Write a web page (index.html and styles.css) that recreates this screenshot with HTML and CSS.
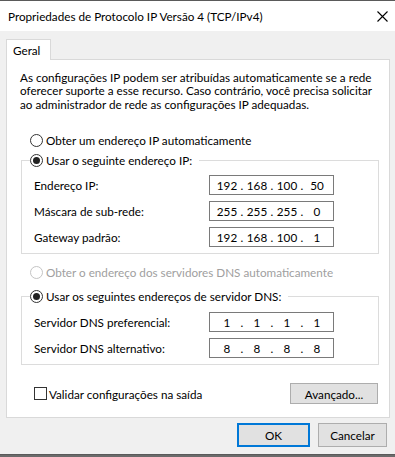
FILE: index.html
```html
<!DOCTYPE html>
<html lang="pt">
<head>
<meta charset="utf-8">
<title>Propriedades de Protocolo IP Versão 4 (TCP/IPv4)</title>
<link rel="stylesheet" href="styles.css">
</head>
<body>
<div class="window">
  <div class="titlebar">
    <span class="title">Propriedades de Protocolo IP Versão 4 (TCP/IPv4)</span>
    <svg class="close" width="11" height="11" viewBox="0 0 11 11"><path d="M0.5 0.5 L10.5 10.5 M10.5 0.5 L0.5 10.5" stroke="#000" stroke-width="1.1" fill="none"/></svg>
  </div>
  <div class="client">
    <div class="tabs"><div class="tab">Geral</div></div>
    <div class="panel">
      <p class="desc">As configurações IP podem ser atribuídas automaticamente se a rede<br>oferecer suporte a esse recurso. Caso contrário, você precisa solicitar<br>ao administrador de rede as configurações IP adequadas.</p>

      <div class="option first"><span class="radio"></span><span>Obter um endereço IP automaticamente</span></div>
      <fieldset class="group ip">
        <legend class="option"><span class="radio checked"></span><span>Usar o seguinte endereço IP:</span></legend>
        <div class="row"><span>Endereço IP:</span><div class="ipbox"><span class="seg">192</span><span class="dot">.</span><span class="seg">168</span><span class="dot">.</span><span class="seg">100</span><span class="dot">.</span><span class="seg">50</span></div></div>
        <div class="row"><span>Máscara de sub-rede:</span><div class="ipbox"><span class="seg">255</span><span class="dot">.</span><span class="seg">255</span><span class="dot">.</span><span class="seg">255</span><span class="dot">.</span><span class="seg">0</span></div></div>
        <div class="row"><span>Gateway padrão:</span><div class="ipbox"><span class="seg">192</span><span class="dot">.</span><span class="seg">168</span><span class="dot">.</span><span class="seg">100</span><span class="dot">.</span><span class="seg">1</span></div></div>
      </fieldset>

      <div class="option dns-auto disabled"><span class="radio"></span><span>Obter o endereço dos servidores DNS automaticamente</span></div>
      <fieldset class="group dns">
        <legend class="option"><span class="radio checked"></span><span>Usar os seguintes endereços de servidor DNS:</span></legend>
        <div class="row"><span>Servidor DNS preferencial:</span><div class="ipbox"><span class="seg">1</span><span class="dot">.</span><span class="seg">1</span><span class="dot">.</span><span class="seg">1</span><span class="dot">.</span><span class="seg">1</span></div></div>
        <div class="row"><span>Servidor DNS alternativo:</span><div class="ipbox"><span class="seg">8</span><span class="dot">.</span><span class="seg">8</span><span class="dot">.</span><span class="seg">8</span><span class="dot">.</span><span class="seg">8</span></div></div>
      </fieldset>

      <div class="bottomrow">
        <label class="check"><span class="box"></span><span>Validar configurações na saída</span></label>
        <button class="btn adv">Avançado...</button>
      </div>
    </div>
    <div class="footer">
      <button class="btn ok">OK</button>
      <button class="btn">Cancelar</button>
    </div>
  </div>
</div>
</body>
</html>
```
FILE: styles.css
```css
* { box-sizing: border-box; }
html, body { margin: 0; padding: 0; }
body {
  background: #6b6b6b;
  font-family: Lato, "Noto Sans", sans-serif;
  font-size: 11.7px;
  color: #000;
}
.window {
  width: 395px;
  height: 455px;
  background: #f0f0f0;
  border-top: 1px solid #5a5a5a;
  border-bottom: 1px solid #5a5a5a;
  display: flex;
  flex-direction: column;
}
.titlebar {
  height: 30px;
  background: #fff;
  display: flex;
  align-items: center;
  justify-content: space-between;
  padding: 0 7px 0 8px;
}
.close { margin-top: 1px; }
.client {
  padding: 8px 6px 0 6px;
  display: flex;
  flex-direction: column;
}
.tabs { display: flex; height: 20px; }
.tab {
  width: 45px;
  height: 21px;
  background: #fff;
  border: 1px solid #d9d9d9;
  border-bottom: none;
  padding: 2px 0 0 6px;
  line-height: 16px;
  position: relative;
  z-index: 1;
}
.panel {
  width: 384px;
  height: 359px;
  background: #fff;
  border: 1px solid #d9d9d9;
  padding: 11px 10px 0 13px;
  display: flex;
  flex-direction: column;
}
.desc {
  margin: 0;
  line-height: 13.4px;
  white-space: nowrap;
}
.option {
  display: flex;
  align-items: center;
  height: 16px;
  line-height: 16px;
}
.option.first { margin-top: 21px; padding-left: 10px; }
.radio {
  width: 13px;
  height: 13px;
  border: 1px solid #333;
  border-radius: 50%;
  margin-right: 3px;
  display: flex;
  align-items: center;
  justify-content: center;
  background: #fff;
  flex: none;
}
.radio.checked::after {
  content: "";
  width: 7px;
  height: 7px;
  border-radius: 50%;
  background: #222;
}
.disabled { color: #a0a0a0; }
.disabled .radio { border-color: #c4c4c4; }
.group {
  margin: 0 0 0 1px;
  border: 1px solid #dcdcdc;
  padding: 7px 44px 6px 8px;
  min-width: 0;
}
.group legend { padding: 0 7px 0 0; }
.group.ip { margin-top: 4px; }
.option.dns-auto { margin-top: 10px; padding-left: 10px; }
.group.dns { margin-top: 8px; padding-top: 8px; }
.row {
  display: flex;
  align-items: center;
  justify-content: space-between;
  height: 20px;
  padding-left: 4px;
}
.row + .row { margin-top: 6px; }
.ipbox {
  width: 125px;
  height: 20px;
  border: 1px solid #7a7a7a;
  display: flex;
  align-items: center;
  padding-left: 4px;
  line-height: 16px;
}
.seg { width: 26px; text-align: center; }
.dot { width: 4px; text-align: center; }
.bottomrow {
  margin-top: 18px;
  display: flex;
  align-items: center;
  justify-content: space-between;
  padding: 0 1px 0 14px;
}
.check { display: flex; align-items: center; }
.box {
  width: 13px;
  height: 13px;
  border: 1px solid #333;
  margin-right: 2px;
  background: #fff;
}
.btn {
  font-family: inherit;
  font-size: 11.7px;
  color: #000;
  background: #e1e1e1;
  border: 1px solid #adadad;
  border-radius: 0;
  padding: 0;
  height: 22px;
  width: 75px;
}
.btn.adv { width: 88px; height: 21px; }
.footer {
  display: flex;
  justify-content: flex-end;
  gap: 8px;
  padding: 5px 2px 0 0;
}
.btn.ok { border: 2px solid #0078d7; width: 73px; height: 24px; }
.footer .btn:last-child { width: 69px; height: 24px; }
```
